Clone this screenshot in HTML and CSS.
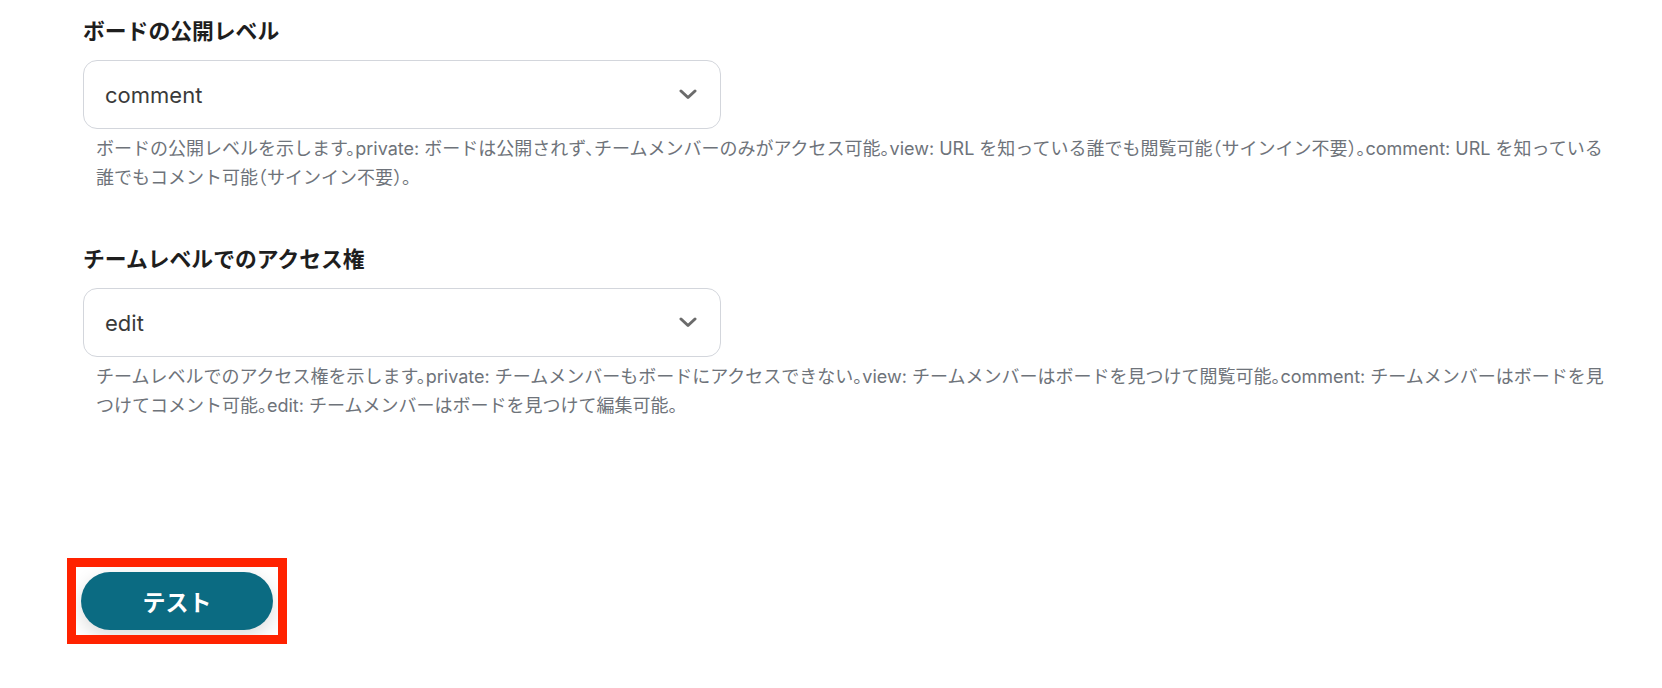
FILE: index.html
```html
<!DOCTYPE html>
<html lang="ja">
<head>
<meta charset="utf-8">
<link rel="stylesheet" href="styles.css">
</head>
<body>
<div class="page">
  <div class="field">
    <div class="label">ボードの公開レベル</div>
    <div class="select">
      <span class="value">comment</span>
      <svg class="chev" width="18" height="11" viewBox="0 0 18 11"><path d="M2 2 L9 8.5 L16 2" fill="none" stroke="#6b6b6b" stroke-width="3" stroke-linecap="round" stroke-linejoin="round"/></svg>
    </div>
    <p class="desc">ボードの公開レベルを示します。private: ボードは公開されず、チームメンバーのみがアクセス可能。view: URL を知っている誰でも閲覧可能（サインイン不要）。comment: URL を知っている誰でもコメント可能（サインイン不要）。</p>
  </div>
  <div class="field second">
    <div class="label">チームレベルでのアクセス権</div>
    <div class="select">
      <span class="value">edit</span>
      <svg class="chev" width="18" height="11" viewBox="0 0 18 11"><path d="M2 2 L9 8.5 L16 2" fill="none" stroke="#6b6b6b" stroke-width="3" stroke-linecap="round" stroke-linejoin="round"/></svg>
    </div>
    <p class="desc">チームレベルでのアクセス権を示します。private: チームメンバーもボードにアクセスできない。view: チームメンバーはボードを見つけて閲覧可能。comment: チームメンバーはボードを見つけてコメント可能。edit: チームメンバーはボードを見つけて編集可能。</p>
  </div>
  <div class="actions">
    <div class="highlight">
      <button class="btn">テスト</button>
    </div>
  </div>
</div>
</body>
</html>
```
FILE: styles.css
```css
html, body {
  margin: 0;
  padding: 0;
  background: #ffffff;
}
body {
  font-family: Inter, "Noto Sans CJK JP", sans-serif;
  color: #222;
}
.page {
  padding: 15px 44px 0 83px;
  display: flex;
  flex-direction: column;
}
.field {
  display: flex;
  flex-direction: column;
}
.field.second {
  margin-top: 51px;
}
.label {
  font-family: "Noto Sans CJK JP", sans-serif;
  font-weight: 700;
  font-size: 21.8px;
  line-height: 30px;
  color: #1e1e1e;
}
.select {
  margin-top: 15px;
  width: 638px;
  height: 69px;
  box-sizing: border-box;
  border: 1px solid #d3d6dc;
  border-radius: 14px;
  display: flex;
  align-items: center;
  justify-content: space-between;
  padding: 0 23px 0 21px;
}
.value {
  font-family: Inter, "Noto Sans CJK JP", sans-serif;
  font-size: 22px;
  color: #3a3a3a;
}
.desc {
  margin: 5px 0 0 0;
  padding: 0 0 0 13px;
  font-family: Inter, "Noto Sans CJK JP", sans-serif;
  font-size: 18px;
  line-height: 29px;
  color: #6e737a;
  font-feature-settings: "halt";
}
.actions {
  margin-top: 138px;
  margin-left: -16px;
  display: flex;
}
.highlight {
  position: relative;
  padding: 14px;
}
.highlight::after {
  content: "";
  position: absolute;
  inset: 0;
  border: 9px solid #ff2200;
  pointer-events: none;
}
.btn {
  display: block;
  width: 192px;
  height: 58px;
  border: none;
  border-radius: 29px;
  background: #0b6b82;
  color: #ffffff;
  font-family: "Noto Sans CJK JP", sans-serif;
  font-weight: 700;
  font-size: 23px;
  box-shadow: 0 6px 18px rgba(0, 0, 0, 0.14);
  cursor: pointer;
}
```
